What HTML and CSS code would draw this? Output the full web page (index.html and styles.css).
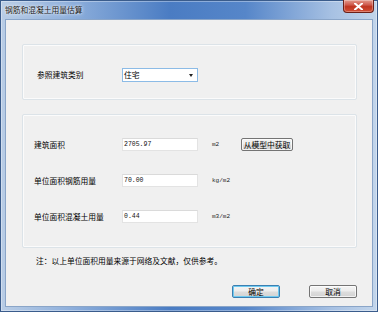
FILE: index.html
```html
<!DOCTYPE html>
<html lang="zh-CN">
<head>
    <meta charset="UTF-8">
    <title>钢筋和混凝土用量估算</title>
    <link rel="stylesheet" href="styles.css">
</head>
<body>
    <div class="window">
        <div class="titlebar">
            <span class="title">钢筋和混凝土用量估算</span>
            <button class="close-btn" aria-label="关闭">
                <svg width="9" height="7" viewBox="0 0 9 7">
                    <path d="M1 0.5 L8 6.5 M8 0.5 L1 6.5" stroke="#fff" stroke-width="2" stroke-linecap="square"/>
                </svg>
            </button>
        </div>

        <div class="client">
            <div class="group group-type">
                <label class="lbl">参照建筑类别</label>
                <div class="combo">
                    <span>住宅</span>
                    <span class="combo-arrow"></span>
                </div>
            </div>

            <div class="group group-values">
                <label class="lbl">建筑面积</label>
                <div class="field">2705.97</div>
                <span class="unit">m2</span>
                <button class="btn btn-model">从模型中获取</button>

                <label class="lbl">单位面积钢筋用量</label>
                <div class="field">70.00</div>
                <span class="unit">kg/m2</span>
                <span></span>

                <label class="lbl">单位面积混凝土用量</label>
                <div class="field">0.44</div>
                <span class="unit">m3/m2</span>
                <span></span>
            </div>

            <p class="note">注：以上单位面积用量来源于网络及文献，仅供参考。</p>

            <div class="actions">
                <button class="btn btn-dlg btn-default">确定</button>
                <button class="btn btn-dlg">取消</button>
            </div>
        </div>
    </div>
</body>
</html>
```

FILE: styles.css
```css
body {
    margin: 0;
    background-color: #fff;
    font-family: "Noto Sans CJK SC", "Noto Sans", sans-serif;
    font-size: 7.75px;
    color: #000;
}

.window {
    width: 378px;
    height: 312px;
    box-sizing: border-box;
    display: flex;
    flex-direction: column;
    border: 1px solid #3a5c8c;
    background: linear-gradient(90deg, #b9cde6 0%, #8fb0dc 18%, #4a7cc3 45%, #5686c9 65%, #a7c1e3 88%, #c2d5eb 100%);
    box-shadow: inset 0 0 0 1px rgba(255, 255, 255, 0.35);
}

.titlebar {
    height: 18px;
    flex-shrink: 0;
    display: flex;
    justify-content: space-between;
    align-items: flex-start;
    padding: 0 3px 0 4px;
}

.title {
    line-height: 17px;
    color: #1a1a1a;
    text-shadow: 0 0 4px rgba(255, 255, 255, 0.9), 0 0 2px rgba(255, 255, 255, 0.9);
}

.close-btn {
    width: 31px;
    height: 13px;
    margin-top: -1px;
    padding: 0;
    border: 1px solid #6b2018;
    border-top: none;
    border-radius: 0 0 4px 4px;
    background: linear-gradient(#e39a8c 0%, #cf5b4d 40%, #bf3520 55%, #d24f36 100%);
    box-shadow: inset 0 0 0 1px rgba(255, 255, 255, 0.3);
    display: flex;
    align-items: center;
    justify-content: center;
}

.client {
    flex: 1;
    margin: 0 4px 4px 4px;
    background-color: #f0f0f0;
    border: 1px solid #8aa5c8;
    display: flex;
    flex-direction: column;
    padding: 24px 15px 0 16px;
}

.group {
    border: 1px solid #dce3e8;
    border-radius: 2px;
    box-shadow: inset 0 0 0 1px #fbfbfb;
}

.lbl {
    line-height: 12px;
    white-space: nowrap;
}

/* 建筑类别 */
.group-type {
    display: flex;
    align-items: center;
    height: 56px;
    box-sizing: border-box;
    padding: 6px 0 0 14px;
}

.group-type .lbl {
    width: 85px;
}

.combo {
    width: 76px;
    height: 14px;
    box-sizing: border-box;
    background: #fff;
    border: 1px solid #8cbbe6;
    display: flex;
    align-items: center;
    justify-content: space-between;
    padding: 0 4px 0 1px;
    line-height: 12px;
}

.combo-arrow {
    width: 0;
    height: 0;
    border-left: 2.5px solid transparent;
    border-right: 2.5px solid transparent;
    border-top: 3px solid #222;
    margin-top: 1px;
}

/* 数值 */
.group-values {
    margin-top: 14px;
    display: grid;
    grid-template-columns: 88px 76px 43px 52px;
    grid-auto-rows: 13px;
    row-gap: 23px;
    align-items: center;
    padding: 23px 0 24px 11px;
}

.field {
    height: 13px;
    box-sizing: border-box;
    background: #fff;
    border: 1px solid #e3e3e3;
    border-top-color: #dadada;
    font-family: "Liberation Mono", monospace;
    font-size: 6.5px;
    line-height: 11px;
    padding-left: 1px;
    color: #111;
}

.unit {
    font-family: "Liberation Mono", monospace;
    font-size: 6px;
    padding-left: 14px;
    white-space: nowrap;
    color: #222;
}

.btn {
    font-family: inherit;
    font-size: 7.75px;
    height: 13px;
    box-sizing: border-box;
    padding: 0;
    line-height: 11px;
    color: #000;
    border: 1px solid #747474;
    border-radius: 2px;
    background: linear-gradient(#f4f4f4 0%, #ececec 48%, #dddddd 52%, #d3d3d3 100%);
    box-shadow: inset 0 0 0 1px rgba(255, 255, 255, 0.7);
}

.btn-model {
    width: 52px;
}

.note {
    margin: 7px 0 0 14px;
    line-height: 12px;
}

.actions {
    margin-top: 18px;
    display: flex;
    justify-content: flex-end;
    gap: 29px;
}

.btn-dlg {
    width: 48px;
}

.btn-default {
    border-color: #3c7fb1;
    box-shadow: inset 0 0 0 1px #6fcaf0;
}
```
